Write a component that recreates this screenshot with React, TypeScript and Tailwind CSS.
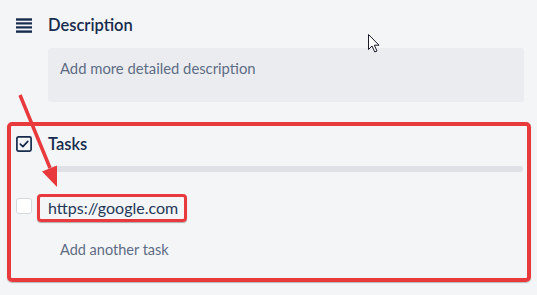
import React from 'react';

const DescriptionIcon: React.FC = () => (
    <svg width="16" height="16" viewBox="0 0 16 16" className="text-[#172b4d]">
        <rect x="0" y="1.3" width="16" height="2.4" fill="currentColor" />
        <rect x="0" y="5.3" width="16" height="2.2" fill="currentColor" />
        <rect x="0" y="9.3" width="16" height="2.2" fill="currentColor" />
        <rect x="0" y="13.4" width="16" height="2.4" fill="currentColor" />
    </svg>
);

const TasksIcon: React.FC = () => (
    <svg width="16" height="16" viewBox="0 0 16 16" fill="none" className="text-[#172b4d]">
        <rect x="0.9" y="0.9" width="14.2" height="14.2" rx="1.6" stroke="currentColor" strokeWidth="1.7" />
        <path d="M4.3 8.1 L6.9 10.6 L11.8 5.3" stroke="currentColor" strokeWidth="1.7" strokeLinecap="round" strokeLinejoin="round" />
    </svg>
);

const App: React.FC = () => {
    return (
        <div className="relative w-[537px] h-[295px] overflow-hidden bg-[#f4f5f7] font-['Lato','Liberation_Sans',sans-serif]">
            {/* Description */}
            <div className="pt-[9px]">
                <div className="flex items-center h-[32px]">
                    <div className="w-[48px] pl-[16px] flex items-center">
                        <DescriptionIcon />
                    </div>
                    <h3 className="text-[16.5px] font-semibold text-[#172b4d] leading-none">Description</h3>
                </div>
                <div className="mt-[7px] ml-[48px] w-[476px] h-[54px] bg-[#ebecf0] rounded-[3px] pl-[12px] pt-[10px]">
                    <p className="text-[14.8px] leading-[20px] text-[#5e6c84]">Add more detailed description</p>
                </div>
            </div>

            {/* Tasks (highlighted) */}
            <div className="mt-[20px] mx-[7px] w-[524px] h-[160px] border-[4px] border-[#e83a3d] rounded-[5px] pl-[5px] pr-[4px] shadow-[0_1px_1px_rgba(0,0,0,0.25)]">
                <div className="flex items-center h-[32px] mt-[2px]">
                    <div className="w-[32px] flex items-center">
                        <TasksIcon />
                    </div>
                    <h3 className="text-[16.5px] font-semibold text-[#172b4d] leading-none">Tasks</h3>
                </div>
                <div className="mt-[6px] ml-[32px] h-[6px] rounded-full bg-[#dfe1e6]" />

                <div className="mt-[22px] flex items-center h-[28px]">
                    <div className="w-[16px] h-[16px] mt-[-4px] bg-white border border-[#d5d9df] rounded-[3px]" />
                    <div className="ml-[5px] h-[28px] flex items-center pl-[8px] pr-[6px] border-[3px] border-[#e83a3d] rounded-[4px] shadow-[0_1px_1px_rgba(0,0,0,0.3)]">
                        <span className="text-[16px] text-[#253858]">https://google.com</span>
                    </div>
                </div>

                <p className="mt-[18px] ml-[44px] text-[14.5px] leading-[20px] text-[#5e6c84]">Add another task</p>
            </div>

            {/* Annotation arrow */}
            <svg className="absolute left-0 top-0 pointer-events-none" width="537" height="295" viewBox="0 0 537 295">
                <line x1="20" y1="95" x2="50" y2="168" stroke="#e83a3d" strokeWidth="3.5" />
                <polygon points="57,187 57,165.5 42,171.5" fill="#e83a3d" />
            </svg>

            {/* Mouse cursor */}
            <svg className="absolute left-[368px] top-[34px] pointer-events-none" width="13" height="19" viewBox="0 0 13 19">
                <path d="M0.5 0.5 L0.5 15.5 L4 12 L6.8 18 L9 17 L6.3 11.2 L11 11.2 Z" fill="#ffffff" stroke="#1b1b2b" strokeWidth="1" strokeLinejoin="round" />
            </svg>
        </div>
    );
};

export default App;
